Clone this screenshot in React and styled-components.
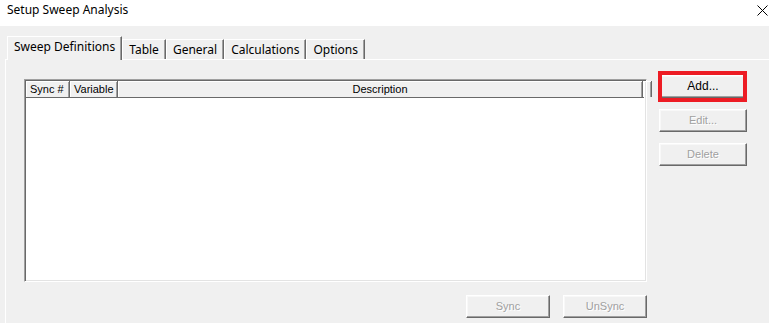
import React from "react";
import styled, { createGlobalStyle } from "styled-components";

const Global = createGlobalStyle`
  html, body { margin: 0; padding: 0; background: #f0f0f0; }
  * { box-sizing: border-box; }
`;

const Window = styled.div`
  width: 769px;
  height: 323px;
  overflow: hidden;
  background: #f0f0f0;
  font-family: "Noto Sans", "Liberation Sans", sans-serif;
  color: #000;
`;

const TitleBar = styled.div`
  height: 26px;
  background: #fff;
  display: flex;
  justify-content: space-between;
  align-items: flex-start;
  padding: 2px 1px 0 7px;
`;

const Title = styled.span`
  font-size: 12px;
  line-height: 16px;
`;

const CloseIcon = styled.svg`
  width: 11px;
  height: 11px;
  margin-top: 3px;
`;

const Body = styled.div`
  padding: 10px 0 0 5px;
`;

const TabStrip = styled.div`
  display: flex;
  align-items: flex-end;
  padding-left: 2px;
  height: 23px;
`;

const Tab = styled.div`
  position: relative;
  height: ${(p) => (p.$active ? "24px" : "20px")};
  margin-bottom: ${(p) => (p.$active ? "-1px" : "0")};
  z-index: ${(p) => (p.$active ? 1 : 0)};
  padding: 0 6px;
  display: flex;
  align-items: ${(p) => (p.$active ? "flex-start" : "center")};
  padding-top: ${(p) => (p.$active ? "2px" : "0")};
  font-size: 12px;
  line-height: 16px;
  background: #f0f0f0;
  border-top: 1px solid #fff;
  border-left: 1px solid #fff;
  border-right: 1px solid #696969;
  box-shadow: inset -1px 0 #a0a0a0;
  white-space: nowrap;
`;

const Panel = styled.div`
  border-top: 1px solid #fff;
  border-left: 1px solid #fff;
  padding: 15px 0 0 18px;
  height: 300px;
`;

const MainRow = styled.div`
  display: flex;
  align-items: flex-start;
`;

const ListColumn = styled.div`
  display: flex;
  flex-direction: column;
  width: 623px;
`;

const ListBox = styled.div`
  margin-top: 4px;
  height: 203px;
  background: #fff;
  border-top: 1px solid #a0a0a0;
  border-left: 1px solid #a0a0a0;
  border-right: 1px solid #fff;
  border-bottom: 1px solid #fff;
  box-shadow: inset 1px 1px #696969, inset -1px -1px #e3e3e3;
  padding: 1px 2px 1px 1px;
`;

const HeaderRow = styled.div`
  display: flex;
  height: 17px;
  background: #f0f0f0;
  border-bottom: 1px solid #696969;
`;

const HeaderCell = styled.div`
  width: ${(p) => (p.$width ? `${p.$width}px` : "auto")};
  flex: ${(p) => (p.$width ? "none" : "1")};
  border-right: 1px solid #696969;
  box-shadow: inset 1px 1px #fff, inset -1px 0 #a0a0a0;
  font-family: "Liberation Sans", Arial, sans-serif;
  font-size: 11px;
  line-height: 16px;
  padding: 0 4px;
  text-align: ${(p) => p.$align || "left"};
  white-space: nowrap;
  overflow: hidden;
`;

const ButtonColumn = styled.div`
  display: flex;
  flex-direction: column;
  gap: 11px;
  margin-left: 12px;
`;

const Button = styled.div`
  position: relative;
  width: ${(p) => p.$width || 88}px;
  height: 23px;
  background: #f0f0f0;
  border: 1px solid;
  border-color: #fff #696969 #696969 #fff;
  box-shadow: inset -1px -1px #a0a0a0, inset 1px 1px #f8f8f8;
  display: flex;
  align-items: center;
  justify-content: center;
  font-family: "Liberation Sans", Arial, sans-serif;
  font-size: ${(p) => (p.$disabled ? "11px" : "12px")};
  color: ${(p) => (p.$disabled ? "#a0a0a0" : "#000")};
  text-shadow: ${(p) => (p.$disabled ? "1px 1px 0 #fff" : "none")};
  padding-bottom: 1px;
`;

const Highlight = styled.div`
  position: absolute;
  top: -5px;
  left: -2px;
  right: -1px;
  bottom: -5px;
  border: 4px solid #ed1c24;
  pointer-events: none;
`;

const BottomRow = styled.div`
  display: flex;
  justify-content: flex-end;
  gap: 13px;
  margin-top: 13px;
`;

const tabs = ["Sweep Definitions", "Table", "General", "Calculations", "Options"];

export default function App() {
  return (
    <>
      <Global />
      <Window>
        <TitleBar>
          <Title>Setup Sweep Analysis</Title>
          <CloseIcon viewBox="0 0 11 11">
            <path d="M0.5 0.5 L10.5 10.5 M10.5 0.5 L0.5 10.5" stroke="#000" strokeWidth="1" fill="none" />
          </CloseIcon>
        </TitleBar>
        <Body>
          <TabStrip>
            {tabs.map((t, i) => (
              <Tab key={t} $active={i === 0}>
                {t}
              </Tab>
            ))}
          </TabStrip>
          <Panel>
            <MainRow>
              <ListColumn>
                <ListBox>
                  <HeaderRow>
                    <HeaderCell $width={44}>Sync #</HeaderCell>
                    <HeaderCell $width={48}>Variable</HeaderCell>
                    <HeaderCell $width={525} $align="center">Description</HeaderCell>
                    <HeaderCell />
                  </HeaderRow>
                </ListBox>
                <BottomRow>
                  <Button $disabled $width={84}>Sync</Button>
                  <Button $disabled $width={84}>UnSync</Button>
                </BottomRow>
              </ListColumn>
              <ButtonColumn>
                <Button>
                  Add...
                  <Highlight />
                </Button>
                <Button $disabled>Edit...</Button>
                <Button $disabled>Delete</Button>
              </ButtonColumn>
            </MainRow>
          </Panel>
        </Body>
      </Window>
    </>
  );
}
